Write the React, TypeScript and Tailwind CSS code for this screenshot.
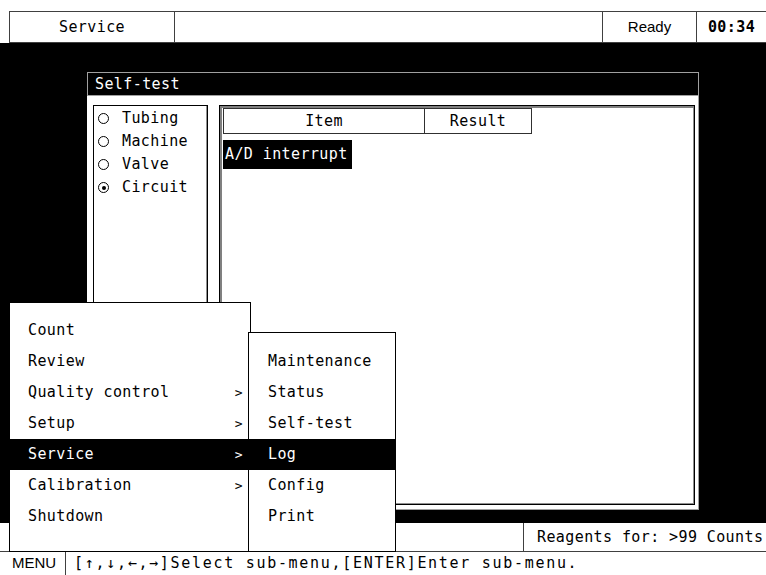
import React from 'react';

const mono = "font-['DejaVu_Sans_Mono',monospace] text-[15px] tracking-[0.4px]";

const mainMenu = [
  { label: 'Count', sub: false },
  { label: 'Review', sub: false },
  { label: 'Quality control', sub: true },
  { label: 'Setup', sub: true },
  { label: 'Service', sub: true, active: true },
  { label: 'Calibration', sub: true },
  { label: 'Shutdown', sub: false },
];

const serviceMenu = ['Maintenance', 'Status', 'Self-test', 'Log', 'Config', 'Print'];

const tests = [
  { label: 'Tubing', on: false },
  { label: 'Machine', on: false },
  { label: 'Valve', on: false },
  { label: 'Circuit', on: true },
];

const Radio: React.FC<{ on: boolean }> = ({ on }) => (
  <span className="w-[11px] h-[11px] rounded-full border border-black flex items-center justify-center">
    {on && <span className="w-[4px] h-[4px] rounded-full bg-black" />}
  </span>
);

export default function App() {
  return (
    <div className={`relative w-[766px] h-[575px] bg-white overflow-hidden text-black ${mono}`}>
      {/* status bar */}
      <div className="h-[11px]" />
      <div className="ml-[9px] h-[32px] flex border border-r-0 border-[#404040] bg-white">
        <div className="w-[165px] flex items-center justify-center border-r border-[#404040]">Service</div>
        <div className="flex-1 border-r border-[#404040]" />
        <div className="w-[94px] flex items-center justify-center border-r border-[#404040] font-['Liberation_Sans',sans-serif] tracking-normal">Ready</div>
        <div className="w-[69px] flex items-center justify-center font-bold">00:34</div>
      </div>

      {/* work area */}
      <div className="h-[480px] bg-black pt-[29px] pl-[87px]">
        <div className="w-[612px] h-[438px] flex flex-col">
          <div className="h-[24px] bg-black border border-[#a0a0a0] text-white flex items-center pl-[7px]">Self-test</div>
          <div className="flex-1 bg-white border-r border-b border-[#a0a0a0] flex pt-[9px] pl-[6px] pr-[3px] pb-[4px] gap-[11px]">
            <div className="w-[115px] border border-black shadow-[inset_-1px_-1px_0_#909090] pt-[1px]">
              {tests.map((t) => (
                <div key={t.label} className="h-[23px] flex items-center pl-[4px] gap-[13px]">
                  <Radio on={t.on} />
                  <span>{t.label}</span>
                </div>
              ))}
            </div>
            <div className="flex-1 border border-black shadow-[inset_2px_2px_0_#808080,inset_-1px_-1px_0_#909090] pt-[2px] pl-[3px]">
              <div className="flex h-[26px]">
                <div className="w-[202px] border border-[#303030] flex items-center justify-center">Item</div>
                <div className="w-[107px] border border-l-0 border-[#303030] flex items-center justify-center">Result</div>
              </div>
              <div className="mt-[6px] h-[29px] w-[129px] bg-black text-white flex items-center pl-[2px]">A/D interrupt</div>
            </div>
          </div>
        </div>
      </div>

      {/* reagents bar */}
      <div className="ml-[9px] h-[28px] flex bg-white border-l border-[#404040]">
        <div className="flex-1 border-r border-[#404040]" />
        <div className="w-[242px] flex items-center pl-[13px]">Reagents for: &gt;99 Counts</div>
      </div>

      {/* hint bar */}
      <div className="h-[24px] flex items-center border-t border-[#404040] bg-white">
        <div className="w-[66px] h-full flex items-center pl-[12px] border-r border-[#404040] font-['Liberation_Sans',sans-serif] tracking-normal">MENU</div>
        <div className="pl-[8px] tracking-[1.7px]">[↑,↓,←,→]Select sub-menu,[ENTER]Enter sub-menu.</div>
      </div>

      {/* main menu */}
      <div className="absolute left-[9px] top-[302px] w-[242px] h-[250px] bg-white border border-black pt-[12px]">
        {mainMenu.map((m) => (
          <div
            key={m.label}
            className={`h-[31px] flex items-center justify-between pl-[18px] pr-[7px] ${m.active ? 'bg-black text-white' : ''}`}
          >
            <span>{m.label}</span>
            {m.sub && <span className="text-[13px]">&gt;</span>}
          </div>
        ))}
      </div>

      {/* service sub-menu */}
      <div className="absolute left-[248px] top-[332px] w-[148px] h-[220px] bg-white border border-black pt-[13px]">
        {serviceMenu.map((s) => (
          <div key={s} className={`h-[31px] flex items-center pl-[19px] ${s === 'Log' ? 'bg-black text-white' : ''}`}>
            {s}
          </div>
        ))}
      </div>
    </div>
  );
}
